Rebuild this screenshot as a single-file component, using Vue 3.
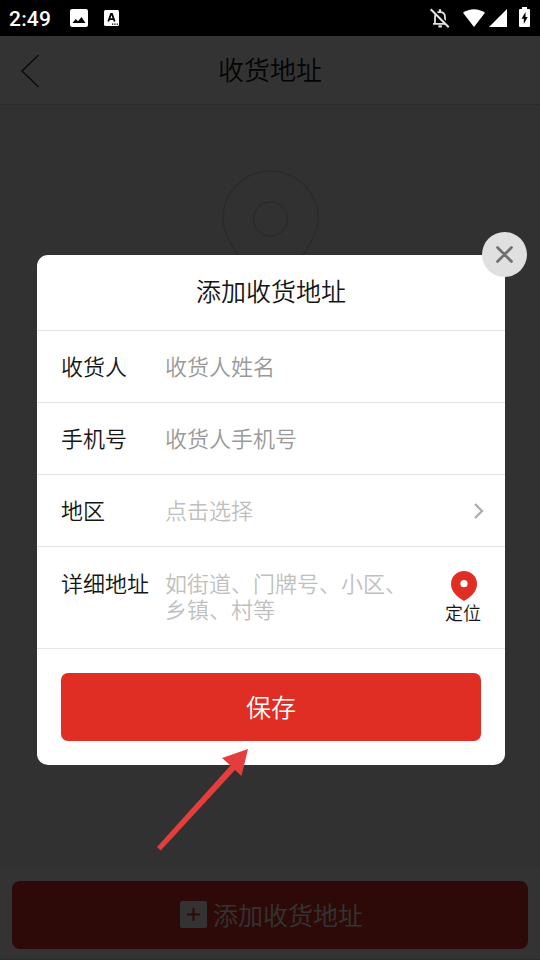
<script setup>
const fields = [
  { label: '收货人', hint: '收货人姓名' },
  { label: '手机号', hint: '收货人手机号' },
  { label: '地区', hint: '点击选择', picker: true },
]
</script>

<template>
  <div class="screen">
    <header class="status">
      <span class="time">2:49</span>
      <svg class="picture" width="18" height="18" viewBox="0 0 18 18">
        <rect width="18" height="18" rx="2" fill="#fff" />
        <path d="M2.500 14 5.700 10 8 12.300 11.500 8 15.500 14Z" fill="#000" />
      </svg>
      <svg class="letter" width="15" height="16" viewBox="0 0 15 16">
        <rect width="15" height="16" rx="1.5" fill="#fff" />
        <path d="M4.300 11.500 7 4h1l2.700 7.500M5.200 9.200h4.600" fill="none" stroke="#000" stroke-width="1.8" />
        <path d="M8 14.200h1.300m1 0h1.300m1 0h1.300" stroke="#000" stroke-width="1.3" />
      </svg>
      <svg class="bell" width="20" height="20" viewBox="0 0 20 20" fill="none" stroke="#e4e4e4" stroke-width="1.8">
        <path d="M3 15.900h14M5 15.500V9.200c0-3 2-5 5-5s5 2 5 5v6.300" />
        <path d="M10 1.200v3M8.400 18.300h3.400" stroke-width="2.3" />
        <path d="m1.800.2 18 18" stroke="#000" stroke-width="2" />
        <path d="m.7 1.200 18 18" stroke-width="2" />
      </svg>
      <svg class="wifi" width="22" height="18" viewBox="0 0 22 18">
        <path d="M0 3.800C6.300-1.100 15.700-1.100 22 3.800L11 18Z" fill="#fff" />
      </svg>
      <svg class="signal" width="18" height="18" viewBox="0 0 18 18">
        <path d="M0 18 18 0v18Z" fill="#fff" />
      </svg>
      <svg class="battery" width="11" height="20" viewBox="0 0 11 20">
        <path d="M3 0h5v2h2q1 0 1 1v16q0 1-1 1H1q-1 0-1-1V3q0-1 1-1h2Z" fill="#fff" />
        <path d="M6.500 5 2.500 11.800h2.300V17L8.700 10H6.500Z" fill="#000" />
      </svg>
    </header>

    <main class="page">
      <div class="navbar">
        <svg class="back" width="20" height="34" viewBox="0 0 20 34">
          <path d="M18.500 1 2 17l16.500 16" fill="none" stroke="#333" stroke-width="1.5" />
        </svg>
        <h1>收货地址</h1>
      </div>
      <div class="empty">
        <svg width="98" height="124" viewBox="0 0 98 124" fill="none" stroke="#d2d2d2" stroke-width="1.6">
          <path d="M49.500 122C43 111 2 79 2 48.500a47.500 47.500 0 0 1 95 0C97 79 56 111 49.500 122Z" />
          <circle cx="49.500" cy="49" r="17" />
        </svg>
      </div>
      <footer class="bottom">
        <button class="add">
          <svg width="27" height="27" viewBox="0 0 27 27">
            <rect width="27" height="27" rx="2" fill="#fff" />
            <path d="M7 13.500h13M13.500 7v13" stroke="#e02e24" stroke-width="2" />
          </svg>
          <span>添加收货地址</span>
        </button>
      </footer>

      <div class="mask">
        <section class="dialog">
          <h2>添加收货地址</h2>
          <div v-for="f in fields" :key="f.label" class="row">
            <span class="label">{{ f.label }}</span>
            <span class="hint" :class="{ pale: f.picker }">{{ f.hint }}</span>
            <svg v-if="f.picker" class="chevron" width="10" height="16" viewBox="0 0 10 16">
              <path d="m1 1 7 7-7 7" fill="none" stroke="#aaa" stroke-width="2.2" />
            </svg>
          </div>
          <div class="row detail">
            <span class="label">详细地址</span>
            <span class="hint pale">如街道、门牌号、小区、<br />乡镇、村等</span>
            <div class="locate">
              <svg width="26" height="30" viewBox="0 0 26 30">
                <path fill="#e02e24" d="M13 0A13 13 0 0 0 0 13c0 8 7 13.500 13 17 6-3.500 13-9 13-17A13 13 0 0 0 13 0Z" />
                <circle cx="13" cy="12.700" r="3.600" fill="#fff" />
              </svg>
              <span>定位</span>
            </div>
          </div>
          <div class="actions">
            <button class="save">保存</button>
          </div>
          <button class="close" aria-label="关闭">
            <svg width="17" height="17" viewBox="0 0 17 17">
              <path d="m1.500 1.500 14 14m0-14-14 14" stroke="#707070" stroke-width="2.700" stroke-linecap="round" />
            </svg>
          </button>
        </section>
      </div>
    </main>

    <svg class="arrow" width="92" height="104" viewBox="0 0 92 104">
      <path fill="#e43d3d" d="M91 1 84.500 28 78 22 3.700 102.500 0 99 73.500 17.500 65 10Z" />
    </svg>
  </div>
</template>

<style>
body {
  margin: 0;
}
</style>

<style scoped>
.screen {
  position: relative;
  display: flex;
  flex-direction: column;
  width: 540px;
  height: 960px;
  overflow: hidden;
  font-family: 'Noto Sans CJK SC', sans-serif;
  font-weight: 350;
  color: #151515;
}
.status {
  display: flex;
  align-items: center;
  flex: none;
  box-sizing: border-box;
  height: 36px;
  padding: 0 10px 0 9px;
  background: #000;
}
.time {
  width: 60.5px;
  font: 500 21px/36px Roboto, sans-serif;
  letter-spacing: 0.2px;
  color: #fff;
  padding-top: 1px;
}
.letter {
  margin-left: 16px;
}
.bell {
  margin-left: auto;
}
.wifi {
  margin-left: 13px;
}
.signal {
  margin-left: 4px;
}
.battery {
  margin-left: 12px;
  margin-bottom: 2px;
}
.page {
  position: relative;
  display: flex;
  flex-direction: column;
  flex: 1;
  background: #f5f5f5;
}
.navbar {
  display: grid;
  grid-template-columns: 40px 1fr 40px;
  align-items: center;
  box-sizing: border-box;
  height: 69px;
  padding: 0 20px;
  background: #fff;
  border-bottom: 1px solid #ddd;
}
.back {
  margin-top: 1px;
}
h1,
h2 {
  margin: 0;
  font-weight: inherit;
  text-align: center;
}
h1 {
  height: 68px;
  font-size: 26px;
  line-height: 66px;
}
.empty {
  flex: 1;
  padding-top: 65px;
  text-align: center;
}
.bottom {
  box-sizing: border-box;
  height: 91px;
  padding: 12px 12px 10px;
  background: #fff;
  border-bottom: 1px solid #ddd;
}
button {
  display: flex;
  align-items: center;
  justify-content: center;
  box-sizing: border-box;
  border: 0;
  padding: 0;
  font: inherit;
  font-size: 25px;
  line-height: 36px;
  color: #fff;
  background: #e02e24;
}
.add {
  gap: 6px;
  width: 100%;
  height: 68px;
  padding: 0 0 1px 3px;
  border-radius: 8px;
}
.add span {
  padding-bottom: 2px;
}
.mask {
  position: absolute;
  inset: 0;
  display: flex;
  justify-content: center;
  align-items: flex-start;
  padding: 219px 35px 0 37px;
  background: rgba(0, 0, 0, 0.8);
}
.dialog {
  position: relative;
  flex: 1;
  height: 510px;
  border-radius: 11px;
  background: #fff;
}
h2 {
  height: 75px;
  font-size: 25px;
  line-height: 71px;
  border-bottom: 1px solid #e4e4e4;
}
.row {
  display: flex;
  align-items: center;
  box-sizing: border-box;
  height: 72px;
  padding: 0 21px 0 24px;
  border-bottom: 1px solid #e4e4e4;
  font-size: 22px;
  line-height: 26px;
}
.label {
  width: 104px;
  flex: none;
}
.label,
.hint {
  padding-bottom: 4px;
}
.hint {
  color: #999;
}
.hint.pale {
  color: #bfbfbf;
}
.chevron {
  margin-left: auto;
  margin-top: 1px;
}
.detail {
  align-items: flex-start;
  height: 102px;
  padding-top: 22px;
}
.locate {
  display: flex;
  flex-direction: column;
  align-items: center;
  margin-left: auto;
  margin-right: 3px;
  margin-top: 2px;
  font-size: 18px;
  line-height: 22px;
}
.locate svg {
  position: relative;
  left: 1px;
}
.actions {
  padding: 24px;
}
.save {
  width: 100%;
  height: 68px;
  padding-bottom: 3px;
  border-radius: 7px;
}
.close {
  position: absolute;
  top: -23px;
  right: -22px;
  width: 45px;
  height: 45px;
  border-radius: 50%;
  background: #e0e0e0;
}
.arrow {
  position: absolute;
  left: 157px;
  top: 748px;
}
</style>
